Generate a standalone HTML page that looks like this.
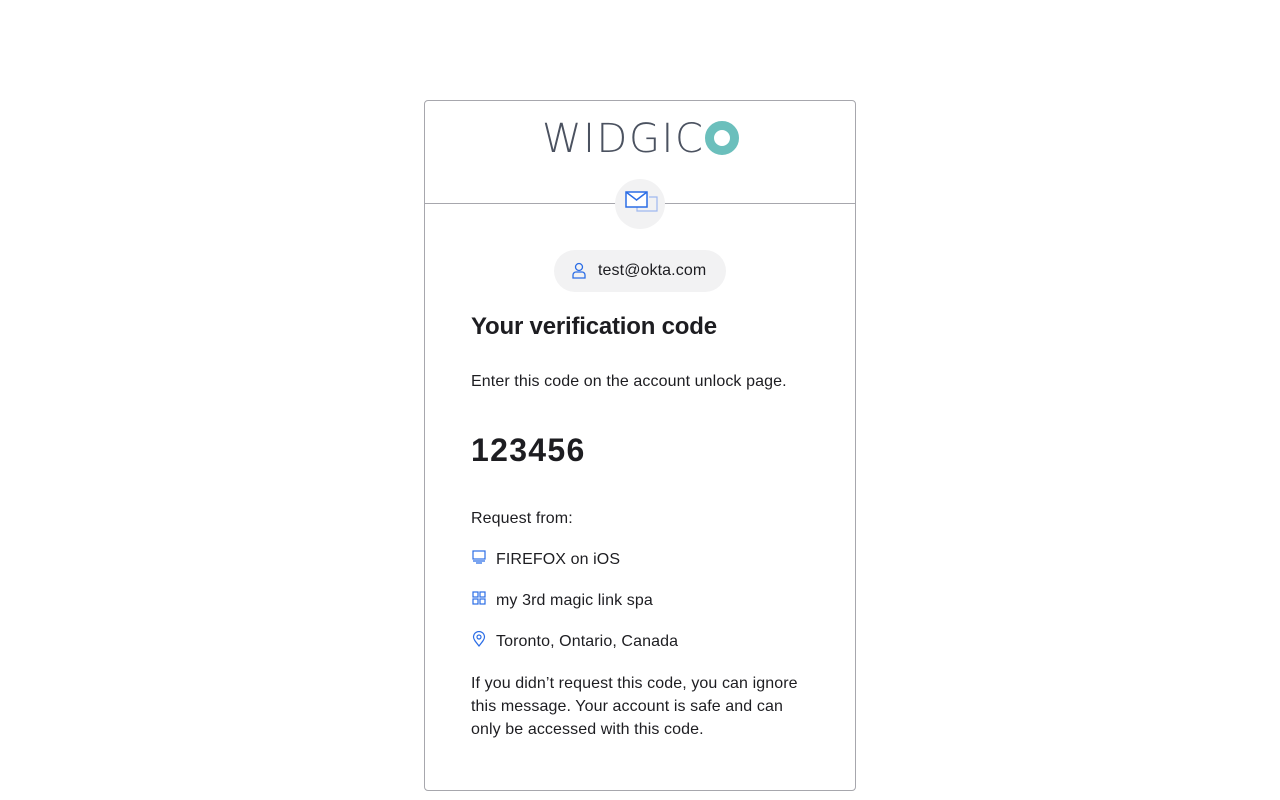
<!DOCTYPE html>
<html><head><meta charset="utf-8"><style>
*{box-sizing:border-box;margin:0;padding:0}
body{width:1280px;height:800px;background:#fff;font-family:"Liberation Sans",sans-serif;color:#1d1d21;position:relative;overflow:hidden}
.card{position:absolute;left:424px;top:100px;width:432px;height:691px;border:1px solid #a7a7ad;border-radius:4px}
.logo{position:absolute;left:117px;top:17px;font-size:40px;color:#4b5260;letter-spacing:1.6px;line-height:42px;font-family:"DejaVu Sans","Liberation Sans",sans-serif;font-weight:200}
.ring{position:absolute;left:280px;top:20px;width:34px;height:34px;border-radius:50%;border:9px solid #6bbfbc}
.hr{position:absolute;left:0;right:0;top:102px;border-top:1px solid #a7a7ad}
.circ{position:absolute;left:190px;top:78px;width:50px;height:50px;border-radius:50%;background:#f2f2f3}
.pill{position:absolute;left:129px;top:149px;width:172px;height:42px;border-radius:21px;background:#f2f2f3;font-size:16px;line-height:42px;padding-left:44px;letter-spacing:0.1px}
.t{position:absolute;left:46px;font-size:16px;letter-spacing:0.1px}
</style></head><body>
<div class="card">
<div class="logo">WIDGIC</div><div class="ring"></div>
<div class="hr"></div>
<div class="circ"><svg width="50" height="50"><path d="M22 24v8h20V18h-8" fill="none" stroke="#9fb8f0" stroke-width="1.2"/><rect x="11" y="13" width="21" height="15" fill="#fff" stroke="#2b6de6" stroke-width="1.5"/><path d="M11 13l10.5 8L32 13" fill="none" stroke="#2b6de6" stroke-width="1.5"/></svg></div>
<div class="pill"><svg style="position:absolute;left:18px;top:12px" width="14" height="17"><circle cx="7" cy="5" r="3.5" fill="none" stroke="#2b6de6" stroke-width="1.3"/><path d="M1 16v-3a3 3 0 0 1 3-3h6a3 3 0 0 1 3 3v3z" fill="none" stroke="#2b6de6" stroke-width="1.3"/></svg>test@okta.com</div>
<div class="t" style="top:212px;font-size:24px;font-weight:bold;letter-spacing:-0.2px">Your verification code</div>
<div class="t" style="top:272px">Enter this code on the account unlock page.</div>
<div class="t" style="top:331px;font-size:32px;font-weight:bold;letter-spacing:1.3px">123456</div>
<div class="t" style="top:409px">Request from:</div>
<svg style="position:absolute;left:47px;top:449px" width="14" height="14"><rect x="1" y="1" width="12" height="8" fill="none" stroke="#2b6de6" stroke-width="1.2"/><path d="M1 11h12M4 13h6" stroke="#2b6de6" stroke-width="1.2"/></svg>
<div class="t" style="top:450px;left:71px">FIREFOX on iOS</div>
<svg style="position:absolute;left:47px;top:490px" width="14" height="14"><g fill="none" stroke="#2b6de6" stroke-width="1.2"><rect x="1" y="1" width="5" height="5"/><rect x="8" y="1" width="5" height="5"/><rect x="1" y="8" width="5" height="5"/><rect x="8" y="8" width="5" height="5"/></g></svg>
<div class="t" style="top:491px;left:71px">my 3rd magic link spa</div>
<svg style="position:absolute;left:47px;top:530px" width="14" height="16"><path d="M7 15C3 10 1.5 8 1.5 6a5.5 5.5 0 0 1 11 0c0 2-1.5 4-5.5 9z" fill="none" stroke="#2b6de6" stroke-width="1.2"/><circle cx="7" cy="6" r="2" fill="none" stroke="#2b6de6" stroke-width="1.2"/></svg>
<div class="t" style="top:532px;left:71px">Toronto, Ontario, Canada</div>
<div class="t" style="top:571px;width:336px;line-height:23px">If you didn’t request this code, you can ignore this message. Your account is safe and can only be accessed with this code.</div>
</div>
</body></html>
